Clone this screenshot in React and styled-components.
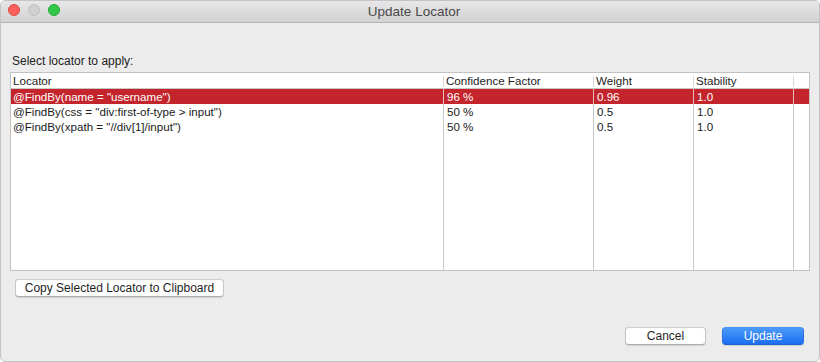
import React from "react";
import styled, { createGlobalStyle } from "styled-components";

const Global = createGlobalStyle`
  html, body { margin: 0; padding: 0; background: #ffffff; }
  body { font-family: "Liberation Sans", "Helvetica Neue", Arial, sans-serif; -webkit-font-smoothing: antialiased; }
  * { box-sizing: border-box; }
`;

const Window = styled.div`
  width: 820px;
  height: 362px;
  background: #ececec;
  border: 1px solid #c4c4c4;
  border-radius: 5px;
  overflow: hidden;
  display: flex;
  flex-direction: column;
`;

const TitleBar = styled.div`
  height: 22px;
  flex: none;
  position: relative;
  display: flex;
  align-items: center;
  justify-content: center;
  background: linear-gradient(#e8e6e8, #d2d2d2);
  border-bottom: 1px solid #b3b3b3;
`;

const Lights = styled.div`
  position: absolute;
  left: 7px;
  top: 3px;
  display: flex;
  gap: 8px;
`;

const Light = styled.span`
  width: 12px;
  height: 12px;
  border-radius: 50%;
  background: ${(p) => p.$c};
  border: 0.5px solid ${(p) => p.$b};
`;

const Title = styled.div`
  font-size: 13.5px;
  color: #4a4a4a;
  margin-left: 8px;
`;

const Body = styled.div`
  flex: 1;
  display: flex;
  flex-direction: column;
  padding: 0 9px 0 9px;
`;

const Label = styled.div`
  margin-top: 31px;
  height: 14px;
  font-size: 12px;
  color: #222;
  padding-left: 2px;
  line-height: 14px;
`;

const Table = styled.div`
  margin-top: 4px;
  width: 800px;
  height: 199px;
  background: #fff;
  border: 1px solid #c2c2c2;
  display: grid;
  grid-template-columns: 432px 150px 100px 100px 1fr;
  grid-template-rows: 16px 15px 15px 15px 1fr;
  font-size: 11.6px;
  color: #1a1a1a;
`;

const HeadCell = styled.div`
  position: relative;
  border-bottom: 1px solid #c8c8c8;
  padding-left: ${(p) => (p.$first ? "2px" : "3px")};
  line-height: 15px;
  color: #222;
  white-space: nowrap;
  &::before {
    content: "";
    display: ${(p) => (p.$first ? "none" : "block")};
    position: absolute;
    left: 0;
    top: 3px;
    height: 11px;
    width: 1px;
    background: #d8d8d8;
  }
`;

const Cell = styled.div`
  padding-left: ${(p) => (p.$first ? "2px" : "3px")};
  line-height: 15px;
  white-space: nowrap;
  overflow: hidden;
  border-left: ${(p) => (p.$first ? "none" : `1px solid ${p.$sel ? "#e8b8ba" : "#c8c8c8"}`)};
  background: ${(p) => (p.$sel ? "#c4242b" : "transparent")};
  color: ${(p) => (p.$sel ? "#ffffff" : "#1a1a1a")};
`;

const CopyRow = styled.div`
  margin-top: 8px;
  padding-left: 5px;
  display: flex;
`;

const Button = styled.button`
  font-family: inherit;
  font-size: 12px;
  height: 18px;
  padding: 0;
  width: ${(p) => p.$w}px;
  border-radius: 4px;
  cursor: default;
  border: 1px solid ${(p) => (p.$primary ? "#2a72e8" : "#c6c6c6")};
  border-top-color: ${(p) => (p.$primary ? "#4a95f8" : "#cfcfcf")};
  border-bottom-color: ${(p) => (p.$primary ? "#1d5fd6" : "#aeaeae")};
  background: ${(p) => (p.$primary ? "linear-gradient(#4b9af9, #1c6ef0)" : "#ffffff")};
  color: ${(p) => (p.$primary ? "#ffffff" : "#1f1f1f")};
  box-shadow: 0 0.5px 1px rgba(0, 0, 0, 0.12);
`;

const Footer = styled.div`
  margin-top: 30px;
  display: flex;
  justify-content: flex-end;
  gap: 16px;
  padding-right: 6px;
`;

const cols = ["Locator", "Confidence Factor", "Weight", "Stability", ""];
const rows = [
  ['@FindBy(name = "username")', "96 %", "0.96", "1.0", ""],
  ['@FindBy(css = "div:first-of-type > input")', "50 %", "0.5", "1.0", ""],
  ['@FindBy(xpath = "//div[1]/input")', "50 %", "0.5", "1.0", ""],
  ["", "", "", "", ""],
];

export default function App() {
  return (
    <>
      <Global />
      <Window>
        <TitleBar>
          <Lights>
            <Light $c="#fc605c" $b="#de4a45" />
            <Light $c="#d0d0d0" $b="#bdbdbd" />
            <Light $c="#34c84a" $b="#26a938" />
          </Lights>
          <Title>Update Locator</Title>
        </TitleBar>
        <Body>
          <Label>Select locator to apply:</Label>
          <Table>
            {cols.map((c, i) => (
              <HeadCell key={"h" + i} $first={i === 0}>
                {c}
              </HeadCell>
            ))}
            {rows.map((r, ri) =>
              r.map((v, ci) => (
                <Cell key={ri + "-" + ci} $first={ci === 0} $sel={ri === 0}>
                  {v}
                </Cell>
              ))
            )}
          </Table>
          <CopyRow>
            <Button $w={209}>Copy Selected Locator to Clipboard</Button>
          </CopyRow>
          <Footer>
            <Button $w={81}>Cancel</Button>
            <Button $w={82} $primary>
              Update
            </Button>
          </Footer>
        </Body>
      </Window>
    </>
  );
}
